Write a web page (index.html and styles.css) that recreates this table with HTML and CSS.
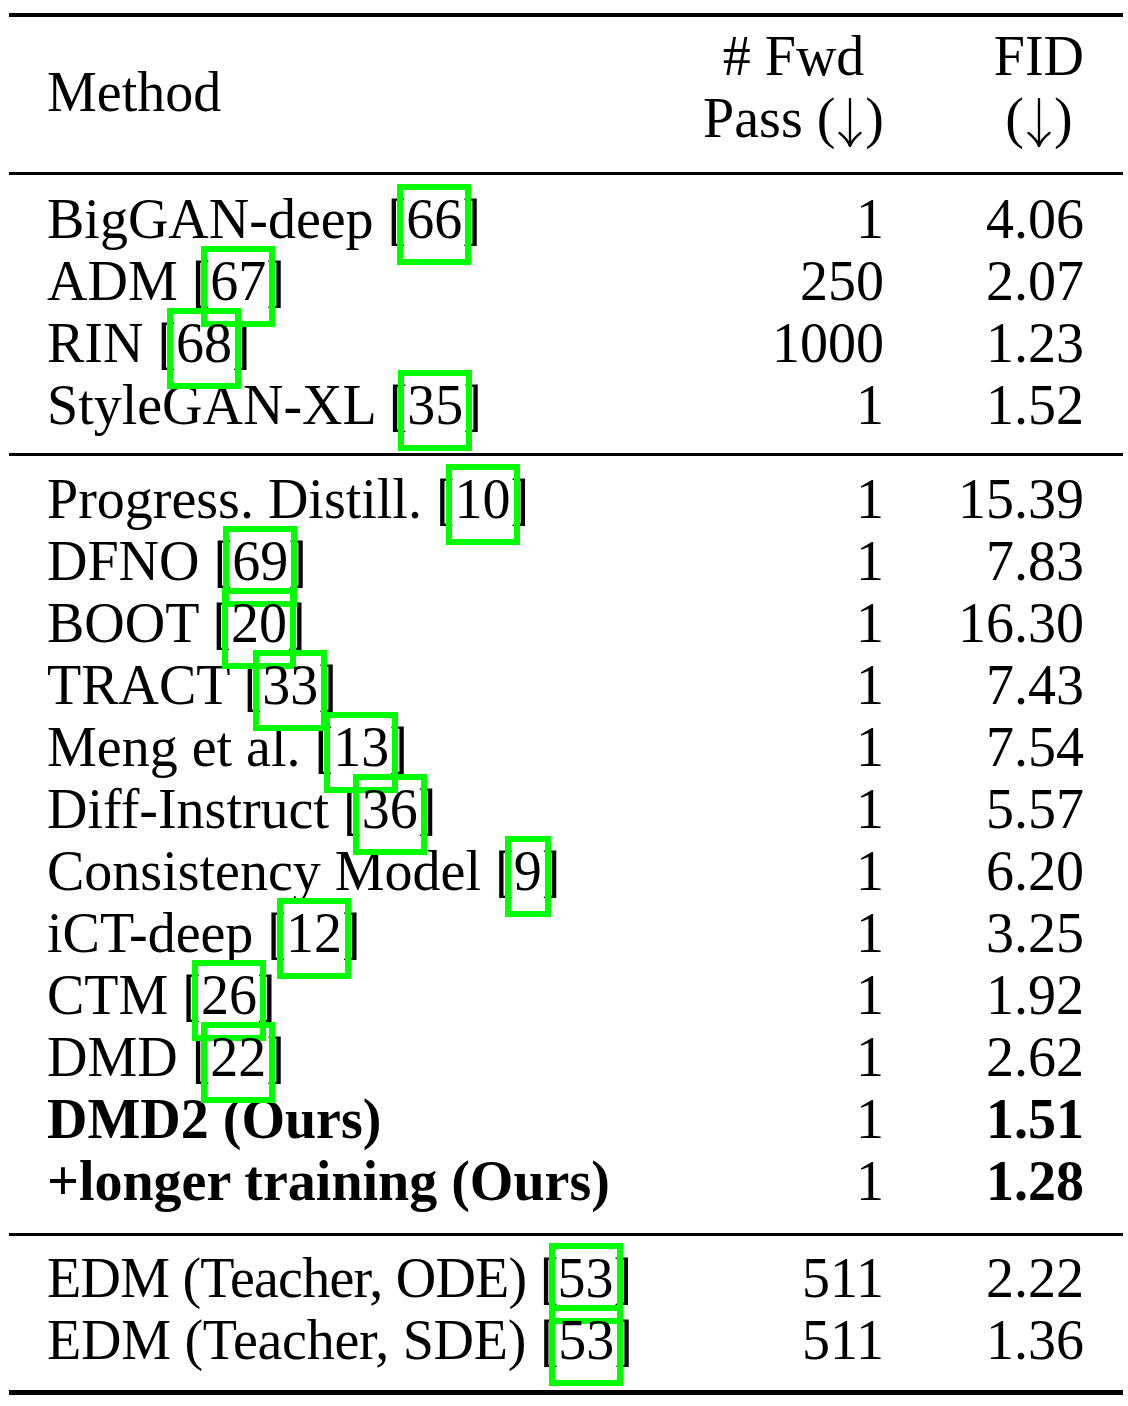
FILE: index.html
```html
<!DOCTYPE html>
<html lang="en">
<head>
<meta charset="utf-8">
<title>Table</title>
<link rel="stylesheet" href="styles.css">
</head>
<body>
<div class="tbl">
  <div class="rule rule-top"></div>
  <div class="head">
    <div class="method">Method</div>
    <div class="hcell">#&nbsp;Fwd<br>Pass (<svg class="arrow" width="28" height="49" viewBox="0 0 28 49" aria-label="down"><path d="M14 1 L14 47.5" /><path d="M3.5 35 C8 38.5 12 42.5 14 48 C16 42.5 20 38.5 24.5 35" /></svg>)</div>
    <div class="hcell">FID<br>(<svg class="arrow" width="28" height="49" viewBox="0 0 28 49" aria-label="down"><path d="M14 1 L14 47.5" /><path d="M3.5 35 C8 38.5 12 42.5 14 48 C16 42.5 20 38.5 24.5 35" /></svg>)</div>
  </div>
  <div class="rule rule-mid"></div>

  <div class="section sec1">
    <div class="row"><div>BigGAN-deep [<span class="cite">66</span>]</div><div class="num">1</div><div class="num">4.06</div></div>
    <div class="row"><div>ADM [<span class="cite">67</span>]</div><div class="num">250</div><div class="num">2.07</div></div>
    <div class="row"><div>RIN [<span class="cite">68</span>]</div><div class="num">1000</div><div class="num">1.23</div></div>
    <div class="row"><div>StyleGAN-XL [<span class="cite">35</span>]</div><div class="num">1</div><div class="num">1.52</div></div>
  </div>
  <div class="rule rule-mid"></div>

  <div class="section sec2">
    <div class="row"><div>Progress. Distill. [<span class="cite">10</span>]</div><div class="num">1</div><div class="num">15.39</div></div>
    <div class="row"><div>DFNO [<span class="cite">69</span>]</div><div class="num">1</div><div class="num">7.83</div></div>
    <div class="row"><div>BOOT [<span class="cite">20</span>]</div><div class="num">1</div><div class="num">16.30</div></div>
    <div class="row"><div>TRACT [<span class="cite">33</span>]</div><div class="num">1</div><div class="num">7.43</div></div>
    <div class="row"><div>Meng et al. [<span class="cite">13</span>]</div><div class="num">1</div><div class="num">7.54</div></div>
    <div class="row"><div>Diff-Instruct [<span class="cite">36</span>]</div><div class="num">1</div><div class="num">5.57</div></div>
    <div class="row"><div>Consistency Model [<span class="cite">9</span>]</div><div class="num">1</div><div class="num">6.20</div></div>
    <div class="row"><div>iCT-deep [<span class="cite">12</span>]</div><div class="num">1</div><div class="num">3.25</div></div>
    <div class="row"><div>CTM [<span class="cite">26</span>]</div><div class="num">1</div><div class="num">1.92</div></div>
    <div class="row"><div>DMD [<span class="cite">22</span>]</div><div class="num">1</div><div class="num">2.62</div></div>
    <div class="row"><div class="bold">DMD2 (Ours)</div><div class="num">1</div><div class="num bold">1.51</div></div>
    <div class="row"><div class="bold">+longer training (Ours)</div><div class="num">1</div><div class="num bold">1.28</div></div>
  </div>
  <div class="rule rule-mid"></div>

  <div class="section sec3">
    <div class="row"><div><span class="tight-ode">EDM (Teacher, ODE) [</span><span class="cite">53</span>]</div><div class="num">511</div><div class="num">2.22</div></div>
    <div class="row"><div><span class="tight-sde">EDM (Teacher, SDE) [</span><span class="cite">53</span>]</div><div class="num">511</div><div class="num">1.36</div></div>
  </div>
  <div class="rule rule-bot"></div>
</div>
</body>
</html>
```
FILE: styles.css
```css
html, body {
  margin: 0;
  padding: 0;
  background: #ffffff;
}

body {
  font-family: "Liberation Serif", "Times New Roman", serif;
  font-size: 56px;
  color: #000000;
}

.tbl {
  margin: 13px 0 0 9px;
  width: 1114px;
}

.rule {
  background: #000000;
}

.rule-top {
  height: 4px;
}

.rule-mid {
  height: 3px;
}

.rule-bot {
  height: 5px;
}

.head {
  display: grid;
  grid-template-columns: 1fr 200px 200px;
  padding: 8px 39px 23px 38px;
  line-height: 62px;
}

.head .method {
  align-self: center;
  padding-top: 10px;
}

.head .hcell {
  justify-self: end;
  text-align: center;
  white-space: nowrap;
}

.arrow {
  display: inline-block;
  vertical-align: -10px;
  margin: 0 1px;
  fill: none;
  stroke: #000000;
  stroke-width: 2.3;
  stroke-linecap: round;
  stroke-linejoin: round;
}

.section {
  padding: 12px 39px 18px 38px;
}

.sec1 {
  padding-top: 13px;
  padding-bottom: 17px;
}

.sec2 {
  padding-top: 12px;
  padding-bottom: 21px;
}

.sec3 {
  padding-top: 11px;
  padding-bottom: 19px;
}

.row {
  display: grid;
  grid-template-columns: 1fr 200px 200px;
  line-height: 62px;
  white-space: nowrap;
}

.num {
  text-align: right;
}

.bold {
  font-weight: bold;
}

.tight-ode {
  letter-spacing: -0.75px;
}

.tight-sde {
  letter-spacing: -0.25px;
}

.cite {
  position: relative;
}

.cite::after {
  content: "";
  position: absolute;
  left: -9px;
  right: -9px;
  top: -4px;
  bottom: -15px;
  border: 6px solid #00ff00;
  box-sizing: border-box;
}
```
